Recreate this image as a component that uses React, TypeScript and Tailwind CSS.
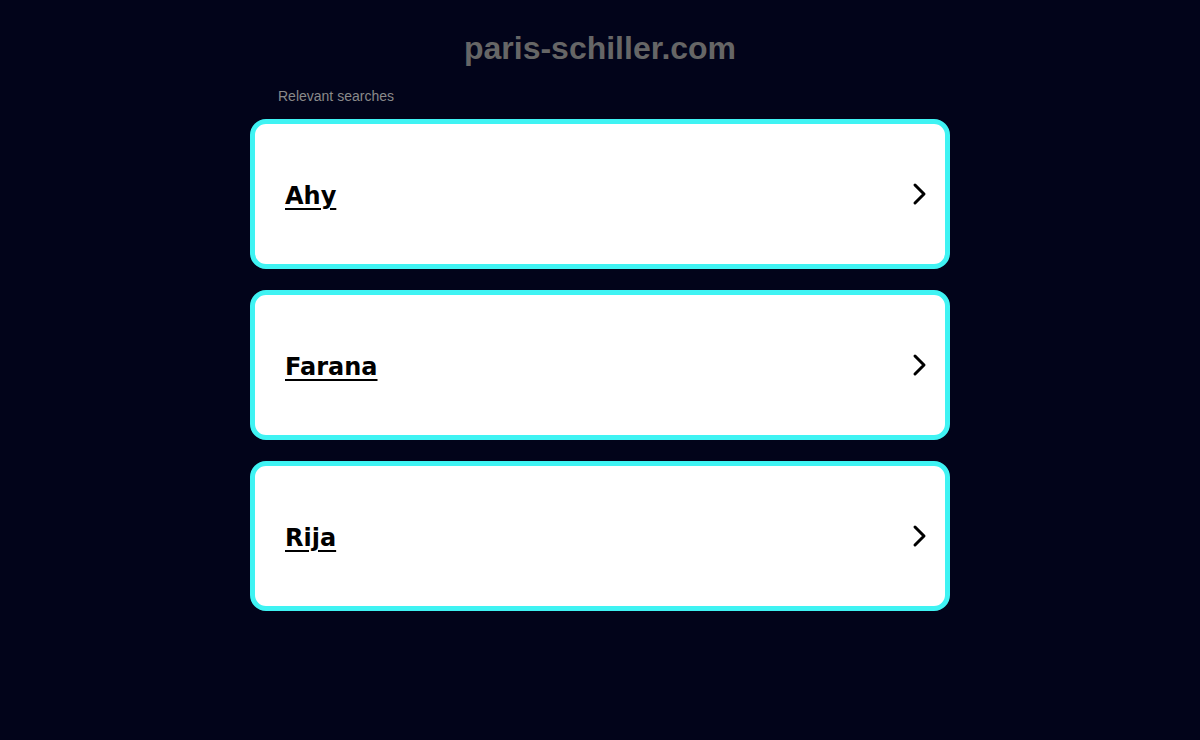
const searches = ['Ahy', 'Farana', 'Rija']

function Chevron() {
  return (
    <svg width="16" height="24" viewBox="0 0 16 24" fill="none" className="shrink-0">
      <path d="M3 3 L12 12 L3 21" stroke="black" strokeWidth="3" strokeLinecap="round" strokeLinejoin="round" />
    </svg>
  )
}

export default function App() {
  return (
    <div className="min-h-[740px] w-full bg-[#02041a] font-['Liberation_Sans',Arial,sans-serif]">
      <div className="mx-auto w-[700px] pt-[28px]">
        <h1 className="text-center text-[32px] font-bold leading-[40px] text-[#666666]">paris-schiller.com</h1>
        <div className="mt-[19px] pl-[28px] text-[14px] leading-[18px] text-[#8a8a8a]">Relevant searches</div>
        <div className="mt-[14px] flex flex-col gap-[21px]">
          {searches.map(s => (
            <a
              key={s}
              href="#"
              className="flex h-[150px] items-center justify-between rounded-[16px] border-[5px] border-[#3ff3f3] bg-white pl-[30px] pr-[17px]"
            >
              <span className="mt-[4px] font-['DejaVu_Sans',Verdana,sans-serif] text-[24px] font-bold text-black underline decoration-2 underline-offset-[4px]">
                {s}
              </span>
              <Chevron />
            </a>
          ))}
        </div>
      </div>
    </div>
  )
}
